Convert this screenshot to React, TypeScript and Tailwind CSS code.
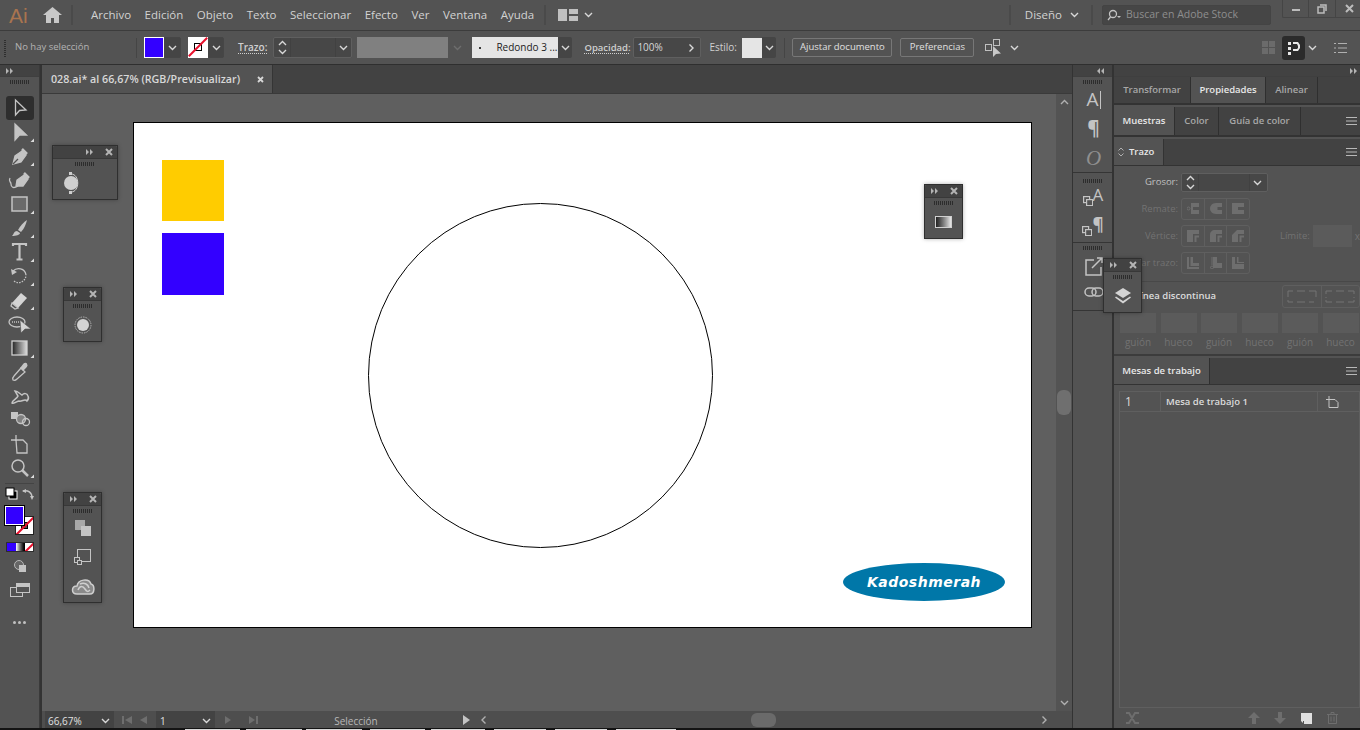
import type { ReactNode } from "react";

const ui = "font-['Open_Sans','Liberation_Sans',sans-serif]";

const Chevron = ({ color = "#d8d8d8", className = "" }: { color?: string; className?: string }) => (
  <svg width="9" height="6" viewBox="0 0 9 6" className={className}>
    <path d="M1 1l3.5 3.5L8 1" fill="none" stroke={color} strokeWidth="1.4" />
  </svg>
);

const Stepper = () => (
  <div className="flex h-full w-[17px] flex-col items-center justify-center gap-[3px] border-r border-[#414141]">
    <Chevron className="rotate-180" />
    <Chevron />
  </div>
);

const DoubleArrow = ({ left = false }: { left?: boolean }) => (
  <svg width="8" height="6" viewBox="0 0 8 6" className={left ? "rotate-180" : ""}>
    <path d="M0 0l3 3-3 3zM4 0l3 3-3 3z" fill="#b4b4b4" />
  </svg>
);

const Gripper = ({ className = "" }: { className?: string }) => (
  <div className={`h-[4px] w-[20px] bg-[repeating-linear-gradient(90deg,#2c2c2c_0,#2c2c2c_1px,transparent_1px,transparent_2px)] ${className}`} />
);

const FloatPanel = ({ className, children }: { className: string; children: ReactNode }) => (
  <div className={`absolute z-10 flex flex-col border border-[#2f2f2f] bg-[#535353] shadow-[0_0_4px_rgba(0,0,0,0.3)] ${className}`}>
    <div className="flex h-[13px] items-center justify-end gap-[11px] rounded-t-[2px] border-b border-[#383838] bg-[#424242] pr-[4px]">
      <DoubleArrow />
      <svg width="8" height="8" viewBox="0 0 8 8">
        <path d="M1 1l6 6M7 1L1 7" stroke="#b4b4b4" strokeWidth="2" />
      </svg>
    </div>
    <Gripper className="mx-auto mt-[3px]" />
    <div className="flex flex-1 flex-col items-center justify-around">{children}</div>
  </div>
);

const Tool = ({ corner = true, active = false, children }: { corner?: boolean; active?: boolean; children: ReactNode }) => (
  <div className={`mx-auto flex h-[24px] w-[28px] items-center justify-center ${active ? "rounded-[3px] bg-[#2e2e2e]" : ""}`}>
    <svg width="28" height="24" viewBox="0 0 28 24" fill="none" stroke="#c4c4c4" strokeWidth="1.3">
      {children}
      {corner && <path d="M28 18.500v3.500h-3.500z" fill="#dcdcdc" stroke="none" />}
    </svg>
  </div>
);

const tools: { corner?: boolean; active?: boolean; icon: ReactNode }[] = [
  { corner: false, active: true, icon: <path d="M9.500 4v15l4-4.500 6.500-.5z" /> },
  { icon: <path d="M9 4v16l4.500-5h7z" fill="#c4c4c4" /> },
  { icon: <g><path d="M7 20l2-8 7-5 4 4-5 7z" fill="#c4c4c4" /><path d="M16 5l5 5" strokeWidth="2.500" /><path d="M7 20l5-5" stroke="#535353" /></g> },
  { corner: false, icon: <g><path d="M10 18l1-6 7-5 4 4-5 7z" fill="#c4c4c4" /><path d="M18 5l5 5" strokeWidth="2.500" /><path d="M4 10c-2 4 1 3 1 6s2 5 7 2" /></g> },
  { icon: <rect x="6" y="5" width="15" height="14" fill="#6a6a6a" strokeWidth="1.500" /> },
  { icon: <g><path d="M21 4c-3 2-7 6-9 10l3 2c3-3 5-8 6-12z" fill="#c4c4c4" stroke="none" /><path d="M11 15c-3 0-3 3-5 5 4 0 8-1 8-3z" fill="#c4c4c4" stroke="none" /></g> },
  { icon: <path d="M7 6V4h13v2M13.500 4v15M10.500 19.500h6" strokeWidth="2.200" /> },
  { icon: <g><path d="M8 17c5 4 12 0 12-6" strokeDasharray="1.500 1.200" /><path d="M7 7c4-4 12-3 13 4" /><path d="M5 5l1 6 5-3z" fill="#c4c4c4" stroke="none" /></g> },
  { icon: <g><path d="M6 15l9-10 6 5-9 10z" fill="#d4d4d4" stroke="none" /><path d="M6 15l6 5-3 1-4-3z" fill="#535353" stroke="#c4c4c4" /></g> },
  { corner: false, icon: <g><ellipse cx="11" cy="10" rx="8" ry="5" /><path d="M6 10h9" strokeDasharray="1 1" /><path d="M14 8l1 13 4-4 6 0z" fill="#d4d4d4" stroke="#535353" strokeWidth="0.600" /></g> },
  { icon: <g><defs><linearGradient id="gtool"><stop offset="0" stopColor="#222" /><stop offset="1" stopColor="#ddd" /></linearGradient></defs><rect x="6" y="5" width="15" height="14" fill="url(#gtool)" stroke="#d0d0d0" /></g> },
  { corner: false, icon: <g><path d="M7 20c-1-2 0-3 1-4l7-8 4 4-8 7c-1 1-2 2-4 1z" /><path d="M15 8l3-4c2-2 4 1 2 3l-3 3z" fill="#c4c4c4" /></g> },
  { corner: false, icon: <g><path d="M6 19c0-3 5-4 6-7l-3-5c3 0 5 3 7 4 2-2 5-2 6 1 1 2 1 3-1 5-2-3-5 1-8 0-2 0-4 3-7 2z" strokeWidth="1.500" /></g> },
  { corner: false, icon: <g><path d="M5 4h7v7H5z" fill="#c4c4c4" stroke="none" /><circle cx="15" cy="11" r="4.500" fill="#808080" /><circle cx="20" cy="14" r="3.500" /></g> },
  { corner: false, icon: <g><path d="M10 8h7l4 4v9H11z" /><path d="M10 3v6M5 8h5" /></g> },
  { icon: <g><circle cx="12" cy="10" r="6" strokeWidth="1.500" /><path d="M16 14l6 6" strokeWidth="2.500" /></g> },
];

const BoxA = ({ glyph, bold = false }: { glyph: string; bold?: boolean }) => (
  <span className="flex items-end leading-none text-[#c4c4c4]">
    <svg width="10" height="10" viewBox="0 0 10 10" fill="none" stroke="#c4c4c4" strokeWidth="1.200">
      <rect x="0.600" y="0.600" width="6" height="6" />
      <rect x="3.600" y="3.600" width="6" height="6" fill="#535353" />
    </svg>
    <span className={`mb-[3px] text-[17px] leading-none ${bold ? "font-bold" : ""}`}>{glyph}</span>
  </span>
);

const capRows: ReactNode[][] = [
  [
    <g><path d="M4 0h8v4H6v3h6v4H4z" /><circle cx="1.500" cy="5.500" r="1.500" fill="none" stroke="#6e6e6e" /></g>,
    <path d="M6 0h6v4H7.500v3H12v4H6C2 11 0 8 0 5.500S2 0 6 0z" />,
    <path d="M0 0h12v4H6v3h6v4H0z" />,
  ],
  [
    <g><path d="M0 0h12v4H6v8H0z" /><path d="M7.500 5.500H12v2H9.500V12h-2z" /></g>,
    <g><path d="M5 0h7v4H6v8H0V5c0-3 2-5 5-5z" /><path d="M7.500 5.500H12v2H9.500V12h-2z" /></g>,
    <g><path d="M5 0h7v4H6v8H0V5z" /><path d="M7.500 5.500H12v2H9.500V12h-2z" /></g>,
  ],
  [
    <g><path d="M0 0h2v10h10v2H0z" /><path d="M3.500 0H6v6h6v3H3.500z" /></g>,
    <g><path d="M3 0h4v6h5v5H3z" /><circle cx="2" cy="10.500" r="1.500" fill="none" stroke="#6e6e6e" /><path d="M2 0v8" stroke="#6e6e6e" /></g>,
    <g><path d="M0 0h3v7h9v5H0z" /><path d="M5 0h1.500v5H12v1H5z" /></g>,
  ],
];

const CapGroup = ({ label, row, className = "" }: { label: string; row: number; className?: string }) => (
  <div className={`flex h-[22px] items-center ${className}`}>
    <span className="mr-[3px] w-[64px] whitespace-nowrap text-right text-[9.500px] text-[#727272]">{label}</span>
    <div className="flex h-full w-[69px] rounded-[3px] border border-[#5f5f5f]">
      {capRows[row].map((icon, i) => (
        <div key={i} className="flex flex-1 items-center justify-center border-r border-[#5f5f5f] last:border-r-0">
          <svg width="12" height="12" viewBox="0 0 12 12" fill="#6e6e6e">{icon}</svg>
        </div>
      ))}
    </div>
  </div>
);

const Tab = ({ label, active = false, w }: { label: string; active?: boolean; w: string }) => (
  <div className={`flex h-full items-center justify-center border-r border-[#2f2f2f] text-[9.500px] font-semibold ${w} ${active ? "bg-[#535353] text-[#e8e8e8]" : "text-[#a8a8a8]"}`}>{label}</div>
);

const Hamburger = () => (
  <svg width="11" height="8" viewBox="0 0 11 8" className="ml-auto mr-[2px]">
    <path d="M0 .5h11M0 4h11M0 7.500h11" stroke="#b8b8b8" />
  </svg>
);

const dashLabels = ["guión", "hueco", "guión", "hueco", "guión", "hueco"];

// trozos claros que asoman en la ultima fila de pixeles
const edgeBits = ["w-[55px] ml-[185px]", "w-[56px] ml-[6px]", "w-[56px] ml-[4px]", "w-[55px] ml-[8px]", "w-[54px] ml-[6px]", "w-[52px] ml-[9px]", "w-[52px] ml-[9px]", "w-[60px] ml-[9px]"];

const App = () => {
  return (
    <div className={`relative flex h-[730px] w-[1360px] flex-col overflow-hidden bg-[#535353] ${ui}`}>
      {/* menu bar */}
      <div className="flex h-[31px] shrink-0 items-center border-b border-[#3c3c3c] text-[11.500px] text-[#d2d2d2]">
        <span className="ml-[9px] w-[22px] font-['Liberation_Sans',sans-serif] text-[21px] leading-none text-[#a9744f]">Ai</span>
        <svg width="19" height="16" viewBox="0 0 19 16" className="ml-[12px]"><path d="M9.500 0L0 8h3v8h5v-5h3v5h5V8h3z" fill="#c8c8c8" /></svg>
        <div className="ml-[9px] h-[20px] w-[2px] bg-[#4a4a4a]" />
        <div className="ml-[18px] flex gap-[13.500px]">
          {["Archivo", "Edición", "Objeto", "Texto", "Seleccionar", "Efecto", "Ver", "Ventana", "Ayuda"].map((m) => (
            <span key={m}>{m}</span>
          ))}
        </div>
        <div className="ml-[10px] h-[20px] w-[2px] bg-[#4a4a4a]" />
        <svg width="20" height="12" viewBox="0 0 20 12" className="ml-[12px]"><path d="M0 0h9v12H0zM11 0h9v5h-9zM11 7h9v5h-9z" fill="#c0c0c0" /></svg>
        <Chevron className="ml-[6px]" />
        <div className="ml-auto h-[20px] w-[2px] bg-[#4a4a4a]" />
        <span className="ml-[14px]">Diseño</span>
        <Chevron className="ml-[8px]" />
        <div className="ml-[12px] h-[20px] w-[2px] bg-[#4a4a4a]" />
        <div className="ml-[9px] flex h-[20px] w-[169px] items-center rounded-[2px] border border-[#444] bg-[#464646] pl-[4px] text-[10.500px] text-[#8e8e8e]">
          <svg width="14" height="12" viewBox="0 0 14 12" fill="none" stroke="#c4c4c4" strokeWidth="1.300"><circle cx="6" cy="5" r="3.500" /><path d="M3.500 8L1 11" /><path d="M10 7h4l-2 2z" fill="#c4c4c4" stroke="none" /></svg>
          <span className="ml-[5px]">Buscar en Adobe Stock</span>
        </div>
        <div className="mb-[12px] ml-[11px] flex h-[18px] w-[78px] items-center rounded-bl-[2px] border-b border-l border-[#454545]">
          <div className="flex h-full w-[26px] items-center justify-center border-r border-[#454545]"><div className="mt-[3px] h-[2px] w-[8px] bg-[#bcbcbc]" /></div>
          <div className="flex h-full w-[27px] items-center justify-center border-r border-[#454545]">
            <svg width="10" height="10" viewBox="0 0 10 10" fill="none" stroke="#bcbcbc" strokeWidth="1.500"><rect x="1" y="3" width="6" height="6" /><path d="M3 1h6v6" /></svg>
          </div>
          <svg width="9" height="9" viewBox="0 0 9 9" className="ml-[9px]"><path d="M1 1l7 7M8 1L1 8" stroke="#bcbcbc" strokeWidth="2" /></svg>
        </div>
      </div>

      {/* control bar */}
      <div className="flex h-[34px] shrink-0 items-center border-b border-[#2f2f2f] text-[10px]">
        <div className="ml-[4px] h-[18px] w-[2px] bg-[repeating-linear-gradient(0deg,#2f2f2f_0,#2f2f2f_1px,transparent_1px,transparent_2px)]" />
        <span className="ml-[9px] w-[121px] text-[9.500px] text-[#b4b4b4]">No hay selección</span>
        <div className="h-[20px] w-px bg-[#454545]" />
        <div className="ml-[7px] h-[21px] w-[20px] border border-white bg-[#3300ff]" />
        <div className="flex h-[21px] w-[17px] items-center justify-center rounded-r-[2px] border border-[#464646] bg-[#454545]"><Chevron /></div>
        <div className="relative ml-[7px] h-[21px] w-[20px] overflow-hidden bg-white">
          <div className="absolute left-[6px] top-[6px] h-[8px] w-[8px] border border-black" />
          <div className="absolute left-[-3px] top-[9px] h-[2px] w-[26px] -rotate-45 bg-[#e8112d]" />
        </div>
        <div className="flex h-[21px] w-[16px] items-center justify-center rounded-r-[2px] border border-[#464646] bg-[#454545]"><Chevron /></div>
        <span className="ml-[14px] border-b border-dotted border-[#d0d0d0] font-semibold leading-[11px] text-[#d0d0d0]">Trazo:</span>
        <div className="ml-[6px] flex h-[21px] w-[79px] items-center rounded-[2px] border border-[#5f5f5f] bg-[#474747]">
          <Stepper />
          <div className="h-full w-[45px] border-r border-[#414141]" />
          <Chevron className="ml-[3px]" />
        </div>
        <div className="ml-[5px] h-[21px] w-[91px] bg-[#808080]" />
        <div className="flex h-[21px] w-[18px] items-center justify-center"><Chevron color="#6e6e6e" /></div>
        <div className="ml-[6px] flex h-[21px] w-[86px] items-center bg-[#e5e5e5] text-[#222]">
          <span className="ml-[7px] h-[2px] w-[2px] rounded-full bg-black" />
          <span className="ml-[15px] whitespace-nowrap">Redondo 3 ...</span>
        </div>
        <div className="flex h-[21px] w-[14px] items-center justify-center rounded-r-[2px] bg-[#454545]"><Chevron /></div>
        <span className="ml-[12px] w-[45px] whitespace-nowrap border-b border-dotted border-[#d0d0d0] text-[9.500px] font-semibold leading-[11px] text-[#d0d0d0]">Opacidad:</span>
        <div className="ml-[4px] flex h-[21px] w-[68px] items-center rounded-[2px] border border-[#5f5f5f] bg-[#474747] pl-[3px] text-[#d8d8d8]">
          <span className="w-[50px]">100%</span>
          <Chevron className="-rotate-90" />
        </div>
        <span className="ml-[8px] w-[33px] text-[#d0d0d0]">Estilo:</span>
        <div className="h-[20px] w-[20px] bg-[#e5e5e5]" />
        <div className="flex h-[21px] w-[14px] items-center justify-center rounded-r-[2px] bg-[#454545]"><Chevron /></div>
        <div className="ml-[8px] h-[20px] w-px bg-[#454545]" />
        <button className="ml-[7px] h-[19px] w-[100px] whitespace-nowrap rounded-[2px] border border-[#777] text-[9.500px] text-[#e0e0e0]">Ajustar documento</button>
        <button className="ml-[8px] h-[19px] w-[74px] rounded-[2px] border border-[#777] text-[9.500px] text-[#e0e0e0]">Preferencias</button>
        <svg width="20" height="20" viewBox="0 0 20 20" className="ml-[10px]" fill="none" stroke="#c0c0c0"><rect x="1.500" y="6.500" width="6" height="6" /><rect x="9.500" y="1.500" width="6" height="6" /><path d="M9 8v11l3-3 5-.5z" fill="#c8c8c8" stroke="none" /></svg>
        <Chevron className="ml-[6px]" />
        <div className="ml-auto grid h-[13px] w-[13px] grid-cols-2 gap-px">
          {[0, 1, 2, 3].map((i) => <div key={i} className="bg-[#6b6b6b]" />)}
        </div>
        <div className="ml-[7px] flex h-[24px] w-[23px] items-center justify-center rounded-[3px] bg-[#2b2b2b]">
          <svg width="14" height="14" viewBox="0 0 14 14"><path d="M1 1h3v3H1zM1 6h3v3H1zM1 11h3v3H1zM6 1h5l2 3v3l-2 3H6V8h4l1-1V5L10 3H6z" fill="#e8e8e8" /></svg>
        </div>
        <Chevron className="ml-[3px]" />
        <svg width="13" height="10" viewBox="0 0 13 10" className="ml-[17px] mr-[13px]"><path d="M0 .5h2M4 .5h9M0 5h2M4 5h9M0 9.500h2M4 9.500h9" stroke="#b0b0b0" /></svg>
      </div>

      {/* work area */}
      <div className="flex min-h-0 flex-1">
        {/* tools */}
        <div className="flex w-[40px] shrink-0 flex-col border-r border-[#3a3a3a]">
          <div className="flex h-[12px] items-center border-b border-[#3f3f3f] bg-[#424242] pl-[6px]"><DoubleArrow /></div>
          <Gripper className="mx-auto mt-[3px]" />
          <div className="mt-[12px] flex flex-col">
            {tools.map((t, i) => (
              <Tool key={i} corner={t.corner} active={t.active}>{t.icon}</Tool>
            ))}
          </div>
          <div className="mx-[5px] mt-[3px] h-px bg-[#444]" />
          <div className="mt-[3px] flex items-center justify-between px-[5px]">
            <svg width="13" height="13" viewBox="0 0 13 13"><rect x="4" y="4" width="8" height="8" fill="#000" stroke="#fff" /><rect x="1" y="1" width="8" height="8" fill="#fff" stroke="#000" /></svg>
            <svg width="12" height="12" viewBox="0 0 12 12" fill="none" stroke="#c4c4c4" strokeWidth="1.500"><path d="M1 3c5-1 9 1 9 7" /><path d="M0 3l4-2v4zM10 12l-2-4h4z" fill="#c4c4c4" stroke="none" /></svg>
          </div>
          <div className="relative ml-[5px] mt-[6px] h-[28px] w-[30px]">
            <div className="absolute left-[10px] top-[10px] h-[19px] w-[19px] overflow-hidden border border-[#222] bg-white">
              <div className="absolute left-[5px] top-[5px] h-[7px] w-[7px] border border-black bg-[#535353]" />
              <div className="absolute left-[-4px] top-[8px] h-[2px] w-[26px] -rotate-45 bg-[#e8112d]" />
            </div>
            <div className="absolute left-0 top-0 h-[19px] w-[19px] border border-white bg-[#3300ff] outline outline-1 outline-black" />
          </div>
          <div className="ml-[6px] mt-[8px] flex h-[10px] w-[28px] border border-[#2e2e2e]">
            <div className="w-[9px] bg-[#3300ff]" />
            <div className="w-[9px] bg-gradient-to-r from-white to-black" />
            <div className="relative w-[8px] overflow-hidden bg-white"><div className="absolute left-[-2px] top-[3px] h-[2px] w-[14px] -rotate-45 bg-[#e8112d]" /></div>
          </div>
          <svg width="14" height="14" viewBox="0 0 14 14" className="ml-[13px] mt-[7px]"><circle cx="6" cy="6" r="4.500" fill="#666" stroke="#b8b8b8" /><rect x="6" y="6" width="7" height="7" fill="#c4c4c4" /></svg>
          <svg width="20" height="14" viewBox="0 0 20 14" fill="none" stroke="#c4c4c4" className="ml-[10px] mt-[10px]"><rect x="0.500" y="4.500" width="12" height="9" /><rect x="6.500" y="0.500" width="13" height="9" fill="#535353" /><path d="M7 2.500h12" strokeWidth="3" /></svg>
          <div className="mt-[24px] flex justify-center gap-[2px]">
            {[0, 1, 2].map((i) => <div key={i} className="h-[3px] w-[3px] rounded-full bg-[#c0c0c0]" />)}
          </div>
        </div>
        <div className="w-[1px] shrink-0 bg-[#333]" />

        {/* document */}
        <div className="flex w-[1031px] shrink-0 flex-col border-l border-[#333]">
          <div className="flex h-[29px] shrink-0 items-stretch border-b border-[#3a3a3a] bg-[#424242]">
            <div className="flex w-[231px] items-center justify-between border-r border-[#353535] bg-[#535353] pl-[9px] pr-[8px] pt-[1px] text-[10.700px] font-semibold text-[#d8d8d8]">
              <span className="whitespace-nowrap">028.ai* al 66,67% (RGB/Previsualizar)</span>
              <svg width="7" height="7" viewBox="0 0 7 7"><path d="M1 1l5 5M6 1L1 6" stroke="#d8d8d8" strokeWidth="1.800" /></svg>
            </div>
          </div>
          <div className="flex min-h-0 flex-1">
            <div className="relative flex-1 bg-[#5f5f5f] pl-[91px] pt-[28px]">
              {/* artboard */}
              <div className="relative h-[506px] w-[899px] border border-black bg-white">
                <div className="absolute left-[28px] top-[37px] h-[61px] w-[62px] bg-[#ffcc00]" />
                <div className="absolute left-[28px] top-[110px] h-[62px] w-[62px] bg-[#3300ff]" />
                <div className="absolute left-[234px] top-[80px] h-[345px] w-[345px] rounded-full border border-black" />
                <div className="absolute left-[709px] top-[440px] flex h-[38px] w-[162px] items-center justify-center rounded-[50%] bg-[#0077a8] font-['DejaVu_Sans',sans-serif] text-[14px] font-bold italic tracking-[0.5px] text-white">Kadoshmerah</div>
              </div>
            </div>
            <div className="relative flex w-[16px] shrink-0 flex-col items-center bg-[#535353]">
              <Chevron className="mt-[5px] rotate-180" color="#b0b0b0" />
              <div className="mt-[285px] h-[25px] w-[14px] rounded-[6px] bg-[#6f6f6f]" />
              <Chevron className="mt-auto mb-[5px]" color="#b0b0b0" />
            </div>
          </div>
          {/* status */}
          <div className="flex h-[17px] shrink-0 items-center bg-[#4e4e4e] text-[10px] text-[#d0d0d0]">
            <div className="ml-[3px] flex h-full w-[51px] items-center bg-[#434343] pl-[3px] pt-[3px] text-[#e0e0e0]">66,67%</div>
            <div className="flex h-full w-[18px] items-center justify-center bg-[#434343] pt-[2px]"><Chevron /></div>
            <svg width="25" height="10" viewBox="0 0 25 10" className="ml-[8px]"><path d="M0 1h2v8H0zM10 1v8L3 5zM25 1v8l-7-4z" fill="#6e6e6e" /></svg>
            <div className="ml-[9px] flex h-full w-[41px] items-center bg-[#434343] pl-[4px] pt-[3px] text-[#e0e0e0]">1</div>
            <div className="flex h-full w-[18px] items-center justify-center bg-[#434343] pt-[2px]"><Chevron /></div>
            <svg width="34" height="10" viewBox="0 0 34 10" className="ml-[10px]"><path d="M0 1v8l6-4zM24 1v8l6-4zM31 1h2v8h-2z" fill="#6e6e6e" /></svg>
            <span className="ml-[47px] w-[100px] pt-[3px] text-center text-[#b8b8b8]">Selección</span>
            <svg width="8" height="10" viewBox="0 0 8 10" className="ml-[57px]"><path d="M0 0v10l7-5z" fill="#c4c4c4" /></svg>
            <Chevron className="ml-[8px] rotate-90" color="#b0b0b0" />
            <div className="ml-[263px] h-[14px] w-[25px] rounded-[6px] bg-[#6a6a6a]" />
            <Chevron className="ml-auto mr-[23px] -rotate-90" color="#b0b0b0" />
          </div>
        </div>
        <div className="w-[1px] shrink-0 bg-[#333]" />

        {/* dock */}
        <div className="flex w-[40px] shrink-0 flex-col border-r border-[#333]">
          <div className="flex h-[12px] items-center justify-end border-b border-[#3f3f3f] bg-[#424242] pr-[8px]"><DoubleArrow left /></div>
          <div className="flex h-[96px] flex-col items-center border-b border-[#353535] pt-[3px]">
            <Gripper />
            <div className="mt-[6px] flex flex-1 flex-col items-center gap-[10px] pl-[2px]">
              <span className="flex items-center text-[19px] leading-none text-[#c4c4c4]">A<span className="ml-[1px] h-[18px] w-px bg-[#c4c4c4]" /></span>
              <span className="text-[19px] font-bold leading-none text-[#c4c4c4]">¶</span>
              <span className="font-['Liberation_Serif',serif] text-[21px] italic leading-none text-[#8f8f8f]">O</span>
            </div>
          </div>
          <div className="flex h-[70px] flex-col items-center border-b border-[#353535] pt-[6px]">
            <Gripper />
            <div className="mt-[3px] flex flex-col items-center gap-[10px] pl-[1px]">
              <BoxA glyph="A" />
              <BoxA glyph="¶" bold />
            </div>
          </div>
          <div className="flex h-[68px] flex-col items-center border-b border-[#353535] pt-[3px]">
            <Gripper />
            <div className="mt-[6px] flex flex-col items-center gap-[10px] pl-[2px]">
              <svg width="20" height="20" viewBox="0 0 20 20" fill="none" stroke="#c4c4c4" strokeWidth="1.500"><path d="M10 4H2v15h15v-8" /><path d="M8 12L18 2M13 2h5v5" /></svg>
              <svg width="20" height="12" viewBox="0 0 20 12" fill="none" stroke="#c4c4c4" strokeWidth="1.500"><rect x="1" y="2" width="11" height="8" rx="4" /><rect x="8" y="2" width="11" height="8" rx="4" /></svg>
            </div>
          </div>
        </div>

        {/* panels */}
        <div className="flex min-w-0 flex-1 flex-col border-l border-[#333]">
          <div className="flex h-[12px] shrink-0 items-center justify-end border-b border-[#3f3f3f] bg-[#424242] pr-[2px]"><DoubleArrow /></div>
          <div className="flex h-[28px] shrink-0 items-center border-b-2 border-[#333] bg-[#424242]">
            <Tab label="Transformar" w="w-[77px]" />
            <Tab label="Propiedades" active w="w-[75px]" />
            <Tab label="Alinear" w="w-[52px]" />
          </div>
          <div className="mt-[2px] flex h-[30px] shrink-0 items-center border-b-2 border-[#333] bg-[#424242] pr-[1px]">
            <Tab label="Muestras" active w="w-[61px]" />
            <Tab label="Color" w="w-[44px]" />
            <Tab label="Guía de color" w="w-[82px]" />
            <Hamburger />
          </div>
          <div className="mt-[2px] flex h-[27px] shrink-0 items-center border-b border-[#333] bg-[#424242] pr-[1px]">
            <div className="flex h-full w-[50px] items-center gap-[5px] border-r border-[#333] bg-[#535353] pl-[4px] text-[9.500px] font-semibold text-[#e8e8e8]">
              <svg width="6" height="10" viewBox="0 0 6 10" fill="none" stroke="#b0b0b0"><path d="M.5 3.500L3 1l2.500 2.500M.5 6.500L3 9l2.500-2.500" /></svg>
              Trazo
            </div>
            <Hamburger />
          </div>
          <div className="flex h-[190px] shrink-0 flex-col border-b-2 border-[#3c3c3c] bg-[#535353]">
            <div className="mt-[7px] flex h-[19px] items-center">
              <span className="mr-[3px] w-[64px] text-right text-[9.500px] text-[#c0c0c0]">Grosor:</span>
              <div className="flex h-full w-[87px] items-center rounded-[2px] border border-[#5f5f5f] bg-[#474747]">
                <Stepper />
                <div className="h-full w-[51px] border-r border-[#414141]" />
                <Chevron className="ml-[3px]" />
              </div>
            </div>
            <CapGroup label="Remate:" row={0} className="mt-[6px]" />
            <div className="mt-[5px] flex items-center">
              <CapGroup label="Vértice:" row={1} />
              <span className="ml-[30px] w-[33px] text-[9.500px] text-[#727272]">Límite:</span>
              <div className="h-[22px] w-[39px] bg-[#5b5b5b]" />
              <span className="ml-[3px] text-[10px] text-[#727272]">x</span>
            </div>
            <CapGroup label="Alinear trazo:" row={2} className="mt-[5px]" />
            <div className="mt-[7px] h-px bg-[#484848]" />
            <div className="mt-[3px] flex h-[23px] items-center">
              <span className="ml-[21px] w-[147px] text-[9.500px] font-semibold text-[#dcdcdc]">Línea discontinua</span>
              <div className="flex h-[23px] w-[78px] rounded-[3px] border border-[#5f5f5f]">
                <div className="flex flex-1 items-center justify-center border-r border-[#5f5f5f]">
                  <svg width="30" height="13" viewBox="0 0 30 13" fill="none" stroke="#757575"><path d="M1 7V1h5M10 1h8M22 1h7v6M1 10v2h5M10 12h8M22 12h5" /></svg>
                </div>
                <div className="flex flex-1 items-center justify-center">
                  <svg width="30" height="13" viewBox="0 0 30 13" fill="none" stroke="#757575"><path d="M1 4V1h6M11 1h8M23 1h6v3M1 7v1M29 7v1M1 10v2h6M11 12h8M23 12h6v-2" /></svg>
                </div>
              </div>
            </div>
            <div className="mt-[5px] flex gap-[4.500px] pl-[6px]">
              {dashLabels.map((l, i) => (
                <div key={i} className="flex w-[36px] flex-col items-center">
                  <div className="h-[20px] w-[36px] bg-[#5b5b5b]" />
                  <span className="mt-[2px] text-[10px] text-[#727272]">{l}</span>
                </div>
              ))}
            </div>
          </div>
          <div className="mt-[2px] flex h-[27px] shrink-0 items-center border-b border-[#333] bg-[#424242] pr-[1px]">
            <Tab label="Mesas de trabajo" active w="w-[96px]" />
            <Hamburger />
          </div>
          <div className="flex min-h-0 flex-1 flex-col bg-[#535353] pl-[5px] pt-[6px]">
            <div className="flex-1 border border-[#5f5f5f]">
              <div className="flex h-[20px] items-center border-b border-[#5f5f5f] text-[10px] text-[#dcdcdc]">
                <span className="w-[41px] border-r border-[#5f5f5f] pl-[5px] text-[12px] leading-[20px]">1</span>
                <span className="w-[157px] border-r border-[#5f5f5f] pl-[5px] text-[9.500px] font-semibold leading-[20px]">Mesa de trabajo 1</span>
                <svg width="14" height="12" viewBox="0 0 14 12" fill="none" stroke="#c4c4c4" className="ml-[7px]"><path d="M4 3.500h6l3 3v5H4zM4 0v3M1 3.500h3" /></svg>
              </div>
            </div>
            <div className="flex h-[20px] shrink-0 items-center pr-[5px]">
              <svg width="14" height="14" viewBox="0 0 14 14" fill="none" stroke="#6e6e6e" strokeWidth="2" className="ml-[7px]"><path d="M0 2h3l6 10h4M0 12h3l6-10h4" /></svg>
              <svg width="12" height="12" viewBox="0 0 12 12" className="ml-auto"><path d="M6 0l6 6H8v6H4V6H0z" fill="#6e6e6e" /></svg>
              <svg width="12" height="12" viewBox="0 0 12 12" className="ml-[14px]"><path d="M6 12l6-6H8V0H4v6H0z" fill="#6e6e6e" /></svg>
              <svg width="11" height="11" viewBox="0 0 11 11" className="ml-[15px]"><path d="M0 0h11v11H3V8H0z" fill="#e0e0e0" /><path d="M0 8h2v2z" fill="#e0e0e0" /></svg>
              <svg width="11" height="12" viewBox="0 0 11 12" fill="none" stroke="#6e6e6e" className="ml-[15px] mr-[17px]"><path d="M0 2.500h11M4 2.500V.5h3v2M1.500 2.500v9h8v-9M4 4.500v5M7 4.500v5" /></svg>
            </div>
          </div>
        </div>
      </div>
      <div className="flex h-[2px] shrink-0 items-end bg-[#141414]">
        {edgeBits.map((b) => <div key={b} className={`h-px bg-[#d8d8d8] ${b}`} />)}
      </div>

      {/* floating panels */}
      <FloatPanel className="left-[52px] top-[145px] h-[55px] w-[66px]">
        <svg width="18" height="22" viewBox="0 0 18 22" className="-ml-[27px]"><circle cx="8" cy="11" r="7" fill="#cfcfcf" /><path d="M8 2c9 0 9 18 0 18" fill="none" stroke="#cfcfcf" /><rect x="6" y="0" width="3" height="3" fill="#cfcfcf" /><rect x="6" y="19" width="3" height="3" fill="#cfcfcf" /></svg>
      </FloatPanel>
      <FloatPanel className="left-[63px] top-[287px] h-[55px] w-[39px]">
        <svg width="18" height="18" viewBox="0 0 18 18"><circle cx="9" cy="9" r="6" fill="#d4d4d4" /><circle cx="9" cy="9" r="8" fill="none" stroke="#b4b4b4" strokeDasharray="1.500 1" /></svg>
      </FloatPanel>
      <FloatPanel className="left-[63px] top-[492px] h-[111px] w-[39px]">
        <svg width="16" height="16" viewBox="0 0 16 16"><rect width="10" height="10" fill="#a8a8a8" /><rect x="6" y="6" width="10" height="10" fill="#c4c4c4" /></svg>
        <svg width="17" height="16" viewBox="0 0 17 16" fill="none" stroke="#c4c4c4"><rect x="3.500" y="0.500" width="13" height="12" /><rect x="0.500" y="8.500" width="5" height="5" fill="#535353" /><rect x="3.500" y="11.500" width="4" height="4" fill="#535353" /></svg>
        <svg width="24" height="16" viewBox="0 0 24 16" fill="#8a8a8a" stroke="#cfcfcf" strokeWidth="1.500"><path d="M6 15c-6 0-6-8 0-8 1-7 12-8 14-2 4 1 4 10-1 10z" /><path d="M7 11c2-5 5-4 7-1s3 3 5 1" fill="none" /><path d="M9 5c4-2 8 0 9 4" fill="none" /></svg>
      </FloatPanel>
      <FloatPanel className="left-[924px] top-[184px] h-[55px] w-[39px]">
        <div className="h-[12px] w-[17px] border border-[#d0d0d0] bg-gradient-to-r from-[#222] to-[#e8e8e8]" />
      </FloatPanel>
      <FloatPanel className="left-[1103px] top-[258px] h-[55px] w-[39px]">
        <svg width="18" height="18" viewBox="0 0 18 18"><path d="M9 1l8 5-8 5-8-5z" fill="#d4d4d4" /><path d="M2 9.500l7 4.500 7-4.500 1 1-8 6-8-6z" fill="#d4d4d4" /></svg>
      </FloatPanel>
    </div>
  );
};

export default App;
